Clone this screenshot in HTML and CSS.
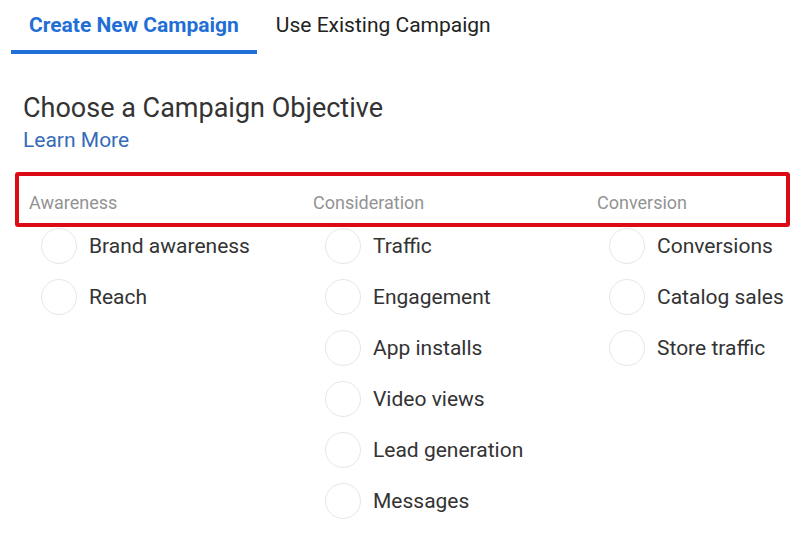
FILE: index.html
```html
<!DOCTYPE html>
<html>
<head>
<meta charset="utf-8">
<link rel="stylesheet" href="styles.css">
</head>
<body>
<div class="tabs">
  <div class="tab active">Create New Campaign</div>
  <div class="tab">Use Existing Campaign</div>
</div>
<div class="intro">
  <h1 class="title">Choose a Campaign Objective</h1>
  <a class="learn">Learn More</a>
</div>
<div class="cats">
  <div class="cat">Awareness</div>
  <div class="cat">Consideration</div>
  <div class="cat">Conversion</div>
</div>
<div class="options">
  <div class="col">
    <div class="opt"><span class="radio"></span>Brand awareness</div>
    <div class="opt"><span class="radio"></span>Reach</div>
  </div>
  <div class="col">
    <div class="opt"><span class="radio"></span>Traffic</div>
    <div class="opt"><span class="radio"></span>Engagement</div>
    <div class="opt"><span class="radio"></span>App installs</div>
    <div class="opt"><span class="radio"></span>Video views</div>
    <div class="opt"><span class="radio"></span>Lead generation</div>
    <div class="opt"><span class="radio"></span>Messages</div>
  </div>
  <div class="col">
    <div class="opt"><span class="radio"></span>Conversions</div>
    <div class="opt"><span class="radio"></span>Catalog sales</div>
    <div class="opt"><span class="radio"></span>Store traffic</div>
  </div>
</div>
</body>
</html>
```
FILE: styles.css
```css
html, body {
  margin: 0;
  padding: 0;
  background: #ffffff;
  font-family: Roboto, "Liberation Sans", sans-serif;
  color: #333333;
}
.tabs {
  display: flex;
  padding-left: 11px;
}
.tab {
  height: 50px;
  line-height: 50px;
  font-size: 21px;
  padding: 0 19px;
  color: #222222;
  border-bottom: 4px solid transparent;
}
.tab.active {
  padding: 0 18px;
  color: #1f6fd6;
  font-weight: bold;
  border-bottom-color: #1f6fd6;
}
.intro {
  padding: 38px 0 0 23px;
}
.title {
  margin: 0;
  font-size: 27px;
  font-weight: normal;
  line-height: 32px;
  color: #333333;
}
.learn {
  display: block;
  margin-top: 3px;
  font-size: 21px;
  line-height: 26px;
  color: #356cb7;
}
.cats {
  display: grid;
  grid-template-columns: 284px 284px 1fr;
  margin: 19px 19px 0 15px;
  height: 47px;
  padding-left: 10px;
  border: 4px solid #dc0a14;
  border-radius: 3px;
  align-items: center;
}
.cat {
  font-size: 18px;
  color: #939393;
  padding-top: 6px;
}
.options {
  display: grid;
  grid-template-columns: 284px 284px 1fr;
  margin: -7px 0 0 41px;
}
.col {
  display: flex;
  flex-direction: column;
}
.opt {
  display: flex;
  align-items: center;
  gap: 12px;
  height: 51px;
  font-size: 21px;
  color: #333333;
}
.radio {
  width: 34px;
  height: 34px;
  border: 1px solid #e6e6e6;
  border-radius: 50%;
  flex: none;
}
```
